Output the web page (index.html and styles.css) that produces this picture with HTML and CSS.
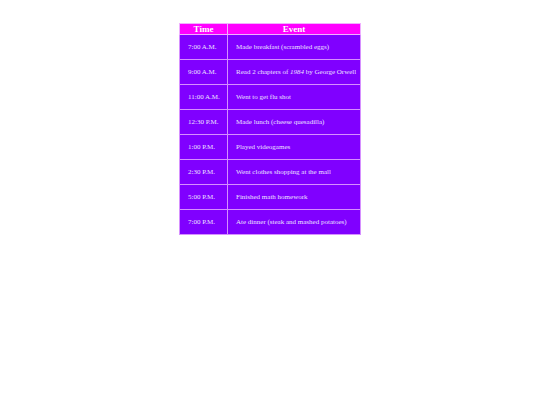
FILE: index.html
```html
<!DOCTYPE html>
<html>
<head>
<meta charset="utf-8">
<link rel="stylesheet" href="styles.css">
</head>
<body>
<table class="schedule">
  <thead>
    <tr><th class="time">Time</th><th>Event</th></tr>
  </thead>
  <tbody>
    <tr><td class="time">7:00 A.M.</td><td>Made breakfast (scrambled eggs)</td></tr>
    <tr><td class="time">9:00 A.M.</td><td>Read 2 chapters of <i>1984</i> by George Orwell</td></tr>
    <tr><td class="time">11:00 A.M.</td><td>Went to get flu shot</td></tr>
    <tr><td class="time">12:30 P.M.</td><td>Made lunch (cheese quesadilla)</td></tr>
    <tr><td class="time">1:00 P.M.</td><td>Played videogames</td></tr>
    <tr><td class="time">2:30 P.M.</td><td>Went clothes shopping at the mall</td></tr>
    <tr><td class="time">5:00 P.M.</td><td>Finished math homework</td></tr>
    <tr><td class="time">7:00 P.M.</td><td>Ate dinner (steak and mashed potatoes)</td></tr>
  </tbody>
</table>
</body>
</html>
```
FILE: styles.css
```css
html, body {
  margin: 0;
  padding: 0;
  background: #ffffff;
}
body {
  font-family: "Liberation Serif", "Times New Roman", serif;
  padding-top: 23px;
}
.schedule {
  margin: 0 auto 0 179px;
  width: 182px;
  border-collapse: collapse;
  border: 1px solid #f0b0ff;
}
.schedule th {
  background: #ff00ff;
  color: #ffffff;
  font-weight: bold;
  font-size: 9px;
  line-height: 10px;
  height: 10px;
  padding: 0;
  text-align: center;
  border: 1px solid #f0b0ff;
}
.schedule td {
  background: #8000ff;
  color: #ece0ff;
  font-size: 7px;
  height: 24px;
  padding: 0 0 0 8px;
  text-align: left;
  border: 1px solid #d690ff;
  white-space: nowrap;
}
.schedule .time {
  width: 39px;
}
.schedule th.time {
  padding: 0;
}
```
